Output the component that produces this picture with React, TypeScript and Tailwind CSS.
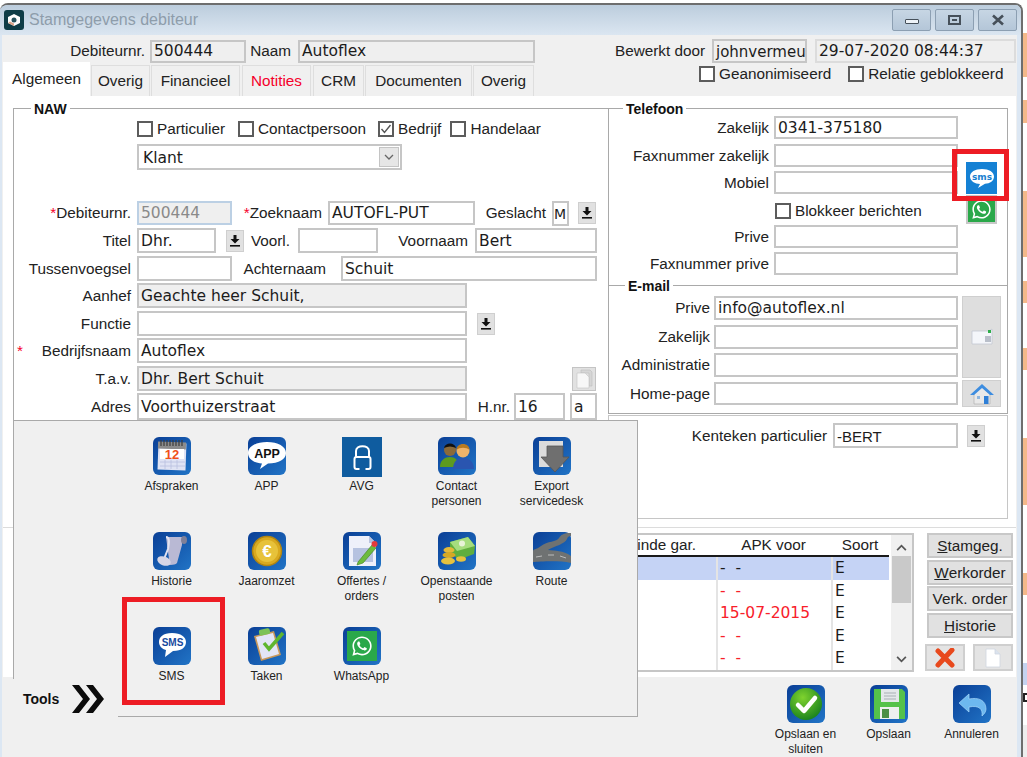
import React from "react";
import { FaWhatsapp } from "react-icons/fa";

const val = "font-[DejaVu_Sans,sans-serif] text-[15.5px] text-[#1c1c1c]";

function F({ className = "", gray = false, children }: { className?: string; gray?: boolean; children?: React.ReactNode }) {
  return (
    <div className={`flex shrink-0 items-center overflow-hidden whitespace-nowrap border-2 border-[#c6c6c6] pl-[2px] pt-[2px] ${gray ? "bg-[#efefef]" : "bg-white"} ${val} ${className}`}>
      {children}
    </div>
  );
}

function L({ className = "", children }: { className?: string; children?: React.ReactNode }) {
  return <div className={`shrink-0 whitespace-nowrap text-right ${className}`}>{children}</div>;
}

function Cb({ label, checked = false, className = "" }: { label: string; checked?: boolean; className?: string }) {
  return (
    <div className={`flex shrink-0 items-center whitespace-nowrap ${className}`}>
      <div className="flex h-[16px] w-[16px] shrink-0 items-center justify-center border-2 border-[#5c5c5c] bg-white">
        {checked && (
          <svg viewBox="0 0 12 12" className="h-[12px] w-[12px]">
            <path d="M1.5 6 L4.5 9.5 L10.5 2" fill="none" stroke="#555" strokeWidth="1.4" />
          </svg>
        )}
      </div>
      <span className="ml-[4px]">{label}</span>
    </div>
  );
}

function Dl({ className = "" }: { className?: string }) {
  return (
    <div className={`flex h-[22px] w-[18px] shrink-0 items-center justify-center border border-[#cfcfcf] bg-[#e1e1e1] ${className}`}>
      <svg viewBox="0 0 12 14" className="h-[14px] w-[12px]">
        <path d="M4.5 1 H7.5 V5 H10.5 L6 9.5 L1.5 5 H4.5 Z" fill="#111" />
        <rect x="1" y="11" width="10" height="1.6" fill="#111" />
      </svg>
    </div>
  );
}

function Tile({ id, children }: { id: string; children?: React.ReactNode }) {
  return (
    <svg viewBox="0 0 38 38" className="h-[38px] w-[38px] shrink-0">
      <defs>
        <linearGradient id={id} x1="0" y1="0" x2="1" y2="1">
          <stop offset="0" stopColor="#0a3f96" />
          <stop offset="1" stopColor="#2174c6" />
        </linearGradient>
      </defs>
      <rect x="0" y="0" width="38" height="38" rx="6" fill={`url(#${id})`} />
      {children}
    </svg>
  );
}

const icons: Record<string, React.ReactNode> = {
  Afspraken: (
    <Tile id="t1">
      <rect x="5" y="6" width="28" height="27" fill="#dfe3f4" transform="rotate(2 19 19)" />
      <rect x="5" y="5" width="28" height="7" fill="#8c8c8c" transform="rotate(2 19 8)" />
      <path d="M8 3v6M11 3v6M14 3v6M17 3v6M20 3v6M23 3v6M26 3v6M29 3v6" stroke="#3c3c3c" strokeWidth="1.2" />
      <rect x="7" y="12" width="24" height="10" fill="#fff" />
      <path d="M7 25h25M7 29h25M12 23v9M18 23v9M24 23v9" stroke="#b8bfe0" strokeWidth="0.8" />
      <text x="19" y="22" textAnchor="middle" fontSize="13" fontWeight="700" fill="#f0501a" fontFamily="Liberation Sans">12</text>
    </Tile>
  ),
  APP: (
    <Tile id="t2">
      <path d="M19 5C8 5 0 9.5 0 16c0 6 6 10 14 10.500L12 32l8-5.500C31 26.500 38 22 38 16 38 9.500 30 5 19 5Z" fill="#fff" />
      <text x="19" y="21" textAnchor="middle" fontSize="12.500" fontWeight="700" fill="#111" fontFamily="Liberation Sans">APP</text>
    </Tile>
  ),
  "Contact personen": (
    <Tile id="t4">
      <path d="M2 30c0-7 5-10 10-10s9 3 9 10Z" fill="#5d9a20" />
      <circle cx="12" cy="13" r="6" fill="#8a6a3a" />
      <path d="M6 11c1-6 11-6 12 0-4-2-8-2-12 0Z" fill="#111" />
      <path d="M15 32c0-8 5-11 10-11s11 3 11 11Z" fill="#2a55b0" />
      <circle cx="25" cy="14" r="6.500" fill="#efb46a" />
      <path d="M18.500 13c0-8 13-8 13 0-3-3-10-3-13 0Z" fill="#b77a20" />
    </Tile>
  ),
  "Export servicedesk": (
    <Tile id="t5">
      <rect x="6" y="4" width="24" height="26" fill="#dcdcdc" />
      <path d="M14 9H30V20H36L22 35L8 20H14Z" fill="#6f6f6f" stroke="#555" strokeWidth="0.8" />
    </Tile>
  ),
  Historie: (
    <Tile id="t6">
      <path d="M13 5H33C29 7 29 10 29 13L24 31C20 35 8 32 6 29L16 27Z" fill="#b9b9d4" />
      <path d="M13 5C17 5 16 11 15 17L11 27" fill="none" stroke="#e2e2f0" strokeWidth="2" />
      <ellipse cx="11" cy="29" rx="7" ry="4.500" fill="#d6d6e6" transform="rotate(20 11 29)" />
      <ellipse cx="31" cy="8" rx="3" ry="4" fill="#7f8098" />
    </Tile>
  ),
  Jaaromzet: (
    <Tile id="t7">
      <circle cx="19" cy="19" r="14.500" fill="#d9a91f" stroke="#b08512" strokeWidth="1.500" />
      <circle cx="19" cy="19" r="11" fill="#e7c23a" />
      <text x="19" y="25" textAnchor="middle" fontSize="17" fontWeight="700" fill="#fff" fontFamily="Liberation Sans">€</text>
    </Tile>
  ),
  "Offertes / orders": (
    <Tile id="t8">
      <path d="M6 4H26L33 11V34H6Z" fill="#eef0fa" />
      <path d="M26 4V11H33Z" fill="#b9c3df" />
      <rect x="10" y="16" width="20" height="14" fill="#b6c2e0" />
      <path d="M15 30L29 13L33 16L20 31L14 33Z" fill="#6dbb3c" stroke="#3f7d1e" strokeWidth="0.6" />
      <circle cx="31.500" cy="12" r="3" fill="#e33b3b" />
    </Tile>
  ),
  "Openstaande posten": (
    <Tile id="t9">
      <path d="M12 10L30 5L37 14L36 22L20 28L12 18Z" fill="#5fae3e" />
      <path d="M12 10L30 5L37 14L19 19Z" fill="#a6dd7e" />
      <circle cx="24" cy="11.500" r="3" fill="#e8f3d8" />
      <ellipse cx="11" cy="18" rx="5.500" ry="3" fill="#e2b93a" />
      <ellipse cx="11" cy="23" rx="6.500" ry="3" fill="#d5a925" />
      <ellipse cx="10" cy="29" rx="7" ry="3.500" fill="#e6c23f" />
      <ellipse cx="23" cy="27" rx="5" ry="2.800" fill="#e6c23f" />
    </Tile>
  ),
  Route: (
    <Tile id="t10">
      <path d="M38 1C30 1 28 3 26 6C24 10 14 9 8 14C3 18 0 17 0 19V30C6 30 24 28 38 31V24C30 18 22 19 15 18C22 14 32 12 34 7C35 4 37 4 38 4Z" fill="#6f7272" />
      <path d="M3 25L9 24M15 23L21 23M27 24L33 26" stroke="#cfcfcf" strokeWidth="0.8" />
    </Tile>
  ),
  SMS: (
    <Tile id="t11">
      <path d="M19 6C10 6 6 10 6 15c0 4 3 7 7 8l-1 7 8-6c9 0 13-4 13-9 0-5-5-9-14-9Z" fill="#fff" />
      <text x="19.500" y="19" textAnchor="middle" fontSize="10" fontWeight="700" fill="#17499e" fontFamily="Liberation Sans">SMS</text>
    </Tile>
  ),
  Taken: (
    <Tile id="t12">
      <path d="M6 9L26 4L33 28L13 34Z" fill="#c9985a" />
      <path d="M8 10L25 6L31 27L14 32Z" fill="#e3e5f6" />
      <rect x="11" y="2" width="11" height="6" rx="2" fill="#7cc257" transform="rotate(-12 16 5)" />
      <path d="M16 16L21 22L35 6" fill="none" stroke="#5fb62f" strokeWidth="3.500" />
    </Tile>
  ),
  WhatsApp: (
    <Tile id="t13">
      <rect x="4" y="4" width="30" height="30" fill="#2aa84a" />
      <g transform="translate(8 8)">
        <FaWhatsapp size={22} color="#fff" />
      </g>
    </Tile>
  ),
};

function AvgIcon() {
  return (
    <svg viewBox="0 0 40 40" className="h-[40px] w-[40px] shrink-0">
      <rect width="40" height="40" fill="#0f5c9f" />
      <path d="M14 20V14C14 7.500 27 7.500 27 14V20" fill="none" stroke="#fff" strokeWidth="2" />
      <path d="M17.500 32H14.500Q12.500 32 12.500 30V22Q12.500 20 14.500 20H26.500Q28.500 20 28.500 22V30Q28.500 32 26.500 32H23.500" fill="none" stroke="#fff" strokeWidth="2" />
    </svg>
  );
}

function Tool({ name, lines }: { name: string; lines: string[] }) {
  return (
    <div className="flex flex-col items-center text-[12px] leading-[15px] text-[#222]">
      {name === "AVG" ? <AvgIcon /> : icons[name]}
      <div className={`text-center whitespace-nowrap ${name === "AVG" ? "mt-[2px]" : "mt-[4px]"}`}>
        {lines.map((l) => (
          <div key={l}>{l}</div>
        ))}
      </div>
    </div>
  );
}

function Save({ children, lines }: { children: React.ReactNode; lines: string[] }) {
  return (
    <div className="flex w-[83px] shrink-0 flex-col items-center text-[12px] leading-[15px] text-[#222]">
      {children}
      <div className="mt-[4px] whitespace-nowrap text-center">
        {lines.map((l) => (
          <div key={l}>{l}</div>
        ))}
      </div>
    </div>
  );
}

function Btn({ first, rest }: { first?: string; rest: string }) {
  return (
    <div className="flex h-[25px] w-[86px] items-center justify-center whitespace-nowrap border-2 border-[#c8c8c8] bg-[#e1e1e1]">
      {first && <span className="underline">{first}</span>}
      {rest}
    </div>
  );
}

const rows = [
  { d: "-  -", red: false, sel: true },
  { d: "-  -", red: true },
  { d: "15-07-2015", red: true },
  { d: "-  -", red: true },
  { d: "-  -", red: true },
];

export default function App() {
  return (
    <div className="relative flex h-[757px] w-[1027px] overflow-hidden bg-white font-[Liberation_Sans,Arial,sans-serif] text-[15.3px] leading-none text-[#222]">
      {/* window */}
      <div className="mt-[3px] flex h-[754px] w-[1023px] shrink-0 flex-col overflow-hidden rounded-t-[8px] border-t-2 border-r-2 border-[#6e6e6e] bg-[#dce7f3]">
        {/* title bar */}
        <div className="flex h-[30px] shrink-0 items-center bg-gradient-to-b from-[#bccddd] to-[#dbe6f1]">
          <svg viewBox="0 0 20 20" className="ml-[4px] h-[20px] w-[20px] shrink-0">
            <rect width="20" height="20" rx="3" fill="#0f3d47" />
            <path d="M10 4L16 7V13L10 16L4 13V7Z" fill="#fff" />
            <circle cx="10" cy="10" r="2.500" fill="#26525c" />
            <path d="M4 13L10 16V13.500L6 11.500Z" fill="#d9a48a" />
          </svg>
          <span className="ml-[5px] text-[16px] text-[#8e9dab]">Stamgegevens debiteur</span>
          <div className="ml-auto mr-[4px] flex gap-[4px]">
            {[0, 1, 2].map((i) => (
              <div key={i} className="flex h-[22px] w-[39px] items-center justify-center rounded-[2px] border border-[#8c9fb2] bg-gradient-to-b from-[#c7d6e4] to-[#b4c6d8]">
                {i === 0 && <div className="mt-[3px] h-[5px] w-[14px] rounded-[1px] border border-[#46505a] bg-[#eef3f8]" />}
                {i === 1 && (
                  <div className="flex h-[10px] w-[13px] items-center justify-center border-2 border-[#46505a]">
                    <div className="h-[2px] w-[5px] bg-[#46505a]" />
                  </div>
                )}
                {i === 2 && (
                  <svg viewBox="0 0 14 12" className="h-[12px] w-[14px]">
                    <path d="M2 1.500L12 10.500M12 1.500L2 10.500" stroke="#46505a" strokeWidth="2.600" />
                  </svg>
                )}
              </div>
            ))}
          </div>
        </div>

        {/* client */}
        <div className="ml-[2px] mr-[4px] flex h-[722px] w-[1015px] flex-col bg-[#f0f0f0]">
          <div className="mt-[4px] flex h-[24px] shrink-0 items-center">
            <L className="w-[143px]">Debiteurnr.</L>
            <F gray className="ml-[5px] h-[23px] w-[96px]">500444</F>
            <L className="ml-[3px] w-[42px]">Naam</L>
            <F gray className="ml-[7px] h-[23px] w-[237px]">Autoflex</F>
            <L className="ml-[80px] w-[90px]">Bewerkt door</L>
            <F gray className="ml-[7px] h-[24px] w-[95px] !text-[15px]">johnvermeu</F>
            <F gray className="ml-[8px] h-[24px] w-[201px] !border-[#dcdcdc]">29-07-2020 08:44:37</F>
          </div>
          <div className="flex h-[33px] shrink-0 items-end">
            <div className="ml-[1px] flex h-[34px] w-[87px] items-center justify-center bg-white">Algemeen</div>
            {[
              { t: "Overig", c: "ml-[1px] w-[59px]" },
              { t: "Financieel", c: "ml-[1px] w-[89px]" },
              { t: "Notities", c: "ml-[2px] w-[69px] text-[#f5002a]" },
              { t: "CRM", c: "ml-[2px] w-[51px]" },
              { t: "Documenten", c: "ml-[1px] w-[107px]" },
              { t: "Overig", c: "ml-[1px] w-[61px]" },
            ].map((x, i) => (
              <div key={i} className={`flex h-[31px] items-center justify-center border-x border-t border-[#dedede] ${x.c}`}>
                {x.t}
              </div>
            ))}
            <div className="ml-[165px] flex h-[33px] items-center pb-[12px]">
              <Cb label="Geanonimiseerd" />
              <Cb label="Relatie geblokkeerd" className="ml-[17px]" />
            </div>
          </div>

          {/* white panel */}
          <div className="ml-[1px] flex h-[581px] w-[1013px] shrink-0 flex-col bg-white">
            <div className="flex h-[431px] shrink-0 pl-[10px] pt-[12px]">
              {/* NAW */}
              <div className="relative h-[419px] w-[595px] shrink-0 border-l border-t border-[#a9a9a9]">
                <div className="absolute left-[17px] top-[-7px] bg-white px-[3px] text-[14px] font-bold leading-[14px] text-[#111]">NAW</div>
                <div className="ml-[123px] mt-[12px] flex h-[16px]">
                  <Cb label="Particulier" />
                  <Cb label="Contactpersoon" className="ml-[13px]" />
                  <Cb label="Bedrijf" checked className="ml-[12px]" />
                  <Cb label="Handelaar" className="ml-[9px]" />
                </div>
                <div className={`relative ml-[123px] mt-[7px] flex h-[26px] w-[265px] items-center border-2 border-[#c6c6c6] pl-[4px] pt-[3px] ${val}`}>
                  Klant
                  <div className="absolute right-[1px] top-[1px] flex h-[20px] w-[20px] items-center justify-center border border-[#c4c4c4] bg-[#e6e6e6]">
                    <svg viewBox="0 0 10 6" className="h-[6px] w-[10px]">
                      <path d="M1 1L5 5L9 1" fill="none" stroke="#666" strokeWidth="1.300" />
                    </svg>
                  </div>
                </div>
                <div className="mt-[31px] flex h-[24px] items-center">
                  <L className="w-[117px]"><span className="text-[#f5002a]">*</span>Debiteurnr.</L>
                  <F gray className="ml-[6px] h-[24px] w-[95px] !border-[#bcd0e4] !text-[#8a8a8a]">500444</F>
                  <L className="w-[90px]"><span className="text-[#f5002a]">*</span>Zoeknaam</L>
                  <F className="ml-[6px] h-[24px] w-[147px]">AUTOFL-PUT</F>
                  <L className="w-[71px]">Geslacht</L>
                  <F className="ml-[6px] h-[25px] w-[17px] !pl-0 !text-[14px]">M</F>
                  <Dl className="ml-[9px]" />
                </div>
                <div className="mt-[3px] flex h-[25px] items-center">
                  <L className="w-[117px]">Titel</L>
                  <F className="ml-[6px] h-[25px] w-[79px]">Dhr.</F>
                  <Dl className="ml-[10px]" />
                  <L className="w-[46px]">Voorl.</L>
                  <F className="ml-[8px] h-[25px] w-[80px]" />
                  <L className="w-[90px]">Voornaam</L>
                  <F className="ml-[7px] h-[25px] w-[122px]">Bert</F>
                </div>
                <div className="mt-[3px] flex h-[25px] items-center">
                  <L className="w-[117px]">Tussenvoegsel</L>
                  <F className="ml-[6px] h-[25px] w-[95px]" />
                  <L className="w-[94px]">Achternaam</L>
                  <F className="ml-[15px] h-[25px] w-[256px]">Schuit</F>
                </div>
                <div className="mt-[2px] flex h-[25px] items-center">
                  <L className="w-[117px]">Aanhef</L>
                  <F gray className="ml-[6px] h-[25px] w-[330px]">Geachte heer Schuit,</F>
                </div>
                <div className="mt-[3px] flex h-[25px] items-center">
                  <L className="w-[117px]">Functie</L>
                  <F className="ml-[6px] h-[25px] w-[330px]" />
                  <Dl className="ml-[10px]" />
                </div>
                <div className="mt-[2px] flex h-[25px] items-center">
                  <L className="flex w-[117px] justify-between">
                    <span className="ml-[3px] text-[#f5002a]">*</span>
                    <span>Bedrijfsnaam</span>
                  </L>
                  <F className="ml-[6px] h-[25px] w-[330px]">Autoflex</F>
                </div>
                <div className="mt-[3px] flex h-[25px] items-center">
                  <L className="w-[117px]">T.a.v.</L>
                  <F gray className="ml-[6px] h-[25px] w-[330px]">Dhr. Bert Schuit</F>
                  <div className="ml-[105px] flex h-[24px] w-[24px] items-center justify-center border border-[#c4c4c4] bg-[#e1e1e1]">
                    <svg viewBox="0 0 18 20" className="h-[20px] w-[18px]">
                      <path d="M6 1H15L17 3V17H14V4H6Z" fill="#d6d6d6" stroke="#bdbdbd" strokeWidth="0.6" />
                      <path d="M2 4H10L14 8V19H2Z" fill="#f7f7f7" stroke="#c4c4c4" strokeWidth="0.6" />
                    </svg>
                  </div>
                </div>
                <div className="mt-[2px] flex h-[27px] items-center">
                  <L className="w-[117px]">Adres</L>
                  <F className="ml-[6px] h-[27px] w-[330px]">Voorthuizerstraat</F>
                  <L className="w-[43px]">H.nr.</L>
                  <F className="ml-[4px] h-[27px] w-[51px]">16</F>
                  <F className="ml-[5px] h-[27px] w-[27px]">a</F>
                </div>
              </div>

              {/* right column */}
              <div className="flex h-[419px] w-[400px] shrink-0 flex-col">
                {/* Telefoon */}
                <div className="relative flex h-[177px] shrink-0 border-x border-t border-[#a9a9a9]">
                  <div className="absolute left-[14px] top-[-7px] bg-white px-[3px] text-[14px] font-bold leading-[14px] text-[#111]">Telefoon</div>
                  <div className="w-[349px] shrink-0">
                    <div className="mt-[7px] flex h-[23px] items-center">
                      <L className="w-[160px]">Zakelijk</L>
                      <F className="ml-[5px] h-[23px] w-[184px]">0341-375180</F>
                    </div>
                    <div className="mt-[5px] flex h-[23px] items-center">
                      <L className="w-[160px]">Faxnummer zakelijk</L>
                      <F className="ml-[5px] h-[23px] w-[184px]" />
                    </div>
                    <div className="mt-[4px] flex h-[23px] items-center">
                      <L className="w-[160px]">Mobiel</L>
                      <F className="ml-[5px] h-[23px] w-[184px]" />
                    </div>
                    <div className="ml-[166px] mt-[9px] flex h-[16px]">
                      <Cb label="Blokkeer berichten" />
                    </div>
                    <div className="mt-[6px] flex h-[23px] items-center">
                      <L className="w-[160px]">Prive</L>
                      <F className="ml-[5px] h-[23px] w-[184px]" />
                    </div>
                    <div className="mt-[4px] flex h-[23px] items-center">
                      <L className="w-[160px]">Faxnummer prive</L>
                      <F className="ml-[5px] h-[23px] w-[184px]" />
                    </div>
                  </div>
                  <div className="ml-[8px] mt-[53px] flex w-[31px] shrink-0 flex-col">
                    <div className="flex h-[32px] w-[31px] items-center justify-center bg-[#1581d4]">
                      <svg viewBox="0 0 26 22" className="h-[22px] w-[26px]">
                        <path d="M13 2C6 2 1 5 1 9.500S6 17 11 17l-2 4 7-4.200C21 16.500 25 14 25 9.500S20 2 13 2Z" fill="#fff" />
                        <text x="13" y="13" textAnchor="middle" fontSize="9" fontWeight="700" fill="#1a7fd0" fontFamily="DejaVu Sans">sms</text>
                      </svg>
                    </div>
                    <div className="mt-[1px] flex h-[29px] w-[31px] items-center justify-center border-2 border-[#c8c8c8] bg-[#2aa84a]">
                      <FaWhatsapp size={21} color="#fff" />
                    </div>
                  </div>
                </div>
                {/* E-mail */}
                <div className="relative flex h-[129px] shrink-0 border-x border-y border-[#a9a9a9]">
                  <div className="absolute left-[16px] top-[-7px] bg-white px-[3px] text-[14px] font-bold leading-[14px] text-[#111]">E-mail</div>
                  <div className="w-[349px] shrink-0">
                    <div className="mt-[10px] flex h-[24px] items-center">
                      <L className="w-[101px]">Prive</L>
                      <F className="ml-[4px] h-[24px] w-[244px]">info@autoflex.nl</F>
                    </div>
                    <div className="mt-[5px] flex h-[24px] items-center">
                      <L className="w-[101px]">Zakelijk</L>
                      <F className="ml-[4px] h-[24px] w-[244px]" />
                    </div>
                    <div className="mt-[4px] flex h-[24px] items-center">
                      <L className="w-[101px]">Administratie</L>
                      <F className="ml-[4px] h-[24px] w-[244px]" />
                    </div>
                    <div className="mt-[5px] flex h-[23px] items-center">
                      <L className="w-[101px]">Home-page</L>
                      <F className="ml-[4px] h-[23px] w-[244px]" />
                    </div>
                  </div>
                  <div className="ml-[4px] mt-[10px] flex w-[39px] shrink-0 flex-col">
                    <div className="flex h-[82px] items-center justify-center border border-[#cfcfcf] bg-[#dedede]">
                      <svg viewBox="0 0 22 18" className="h-[18px] w-[22px]">
                        <path d="M1 3H18L21 1V16H1Z" fill="#f4f6fa" stroke="#c3c8d2" strokeWidth="0.8" />
                        <rect x="14" y="8" width="6" height="6" fill="#b9bfca" />
                        <rect x="17" y="2" width="3" height="3" fill="#2dae4a" />
                      </svg>
                    </div>
                    <div className="mt-[2px] flex h-[27px] items-center justify-center border border-[#cfcfcf] bg-[#dedede]">
                      <svg viewBox="0 0 26 22" className="h-[22px] w-[26px]">
                        <path d="M5 11V21H21V11L13 4Z" fill="#e9e9e9" stroke="#a8a8a8" strokeWidth="0.6" />
                        <path d="M1 12L13 1L25 12L21 12L13 5L5 12Z" fill="#3d8de0" />
                        <rect x="15" y="13" width="4.500" height="8" fill="#2f7fd6" />
                        <rect x="8" y="13" width="3" height="3" fill="#8fb6df" />
                      </svg>
                    </div>
                  </div>
                </div>
                {/* Kenteken */}
                <div className="mt-[1px] h-[104px] shrink-0 border-x border-y border-[#c6c6c6]">
                  <div className="mt-[7px] flex h-[25px] items-center">
                    <L className="w-[218px]">Kenteken particulier</L>
                    <F className="ml-[6px] h-[25px] w-[125px] !text-[15px] !font-[Liberation_Sans,sans-serif]">-BERT</F>
                    <Dl className="ml-[9px]" />
                  </div>
                </div>
              </div>
            </div>

            {/* lower */}
            <div className="flex h-[150px] shrink-0 border-t border-[#dcdcdc] pt-[5px]">
              <div className="ml-[597px] flex h-[139px] w-[314px] shrink-0 border-2 border-[#c6c6c6]">
                <div className="w-[287px] shrink-0">
                  <div className="grid h-[22px] grid-cols-[114px_115px_58px] items-center border-b-2 border-[#1a1a1a] text-center">
                    <div className="pr-[20px] text-right">Einde gar.</div>
                    <div>APK voor</div>
                    <div>Soort</div>
                  </div>
                  {rows.map((r, i) => (
                    <div key={i} className={`grid h-[22.500px] grid-cols-[114px_115px_58px] items-center ${val} ${r.sel ? "bg-[#c5d3f5]" : ""}`}>
                      <div />
                      <div className={`h-full border-l-2 border-[#e4e4e4] pl-[2px] leading-[22px] whitespace-pre ${r.red ? "text-[#f8202a]" : ""}`}>{r.d}</div>
                      <div className="h-full border-l-2 border-[#e4e4e4] pl-[2px] leading-[22px]">E</div>
                    </div>
                  ))}
                </div>
                <div className="ml-[2px] flex w-[21px] shrink-0 flex-col items-center bg-[#f0f0f0]">
                  <svg viewBox="0 0 12 8" className="mt-[9px] h-[7px] w-[11px]">
                    <path d="M1 7L6 2L11 7" fill="none" stroke="#555" strokeWidth="2" />
                  </svg>
                  <div className="mt-[5px] h-[47px] w-[19px] bg-[#c9c9c9]" />
                  <svg viewBox="0 0 12 8" className="mt-[53px] h-[7px] w-[11px]">
                    <path d="M1 1L6 6L11 1" fill="none" stroke="#555" strokeWidth="2" />
                  </svg>
                </div>
              </div>
              <div className="ml-[13px] flex w-[86px] shrink-0 flex-col">
                <div className="flex flex-col gap-[1.700px]">
                  <Btn first="S" rest="tamgeg." />
                  <Btn first="W" rest="erkorder" />
                  <Btn rest="Verk. order" />
                  <Btn first="H" rest="istorie" />
                </div>
                <div className="ml-[-2px] mt-[6px] flex gap-[8px]">
                  <div className="flex h-[27px] w-[40px] items-center justify-center border-2 border-[#cfcfcf] bg-[#e4e4e4]">
                    <svg viewBox="0 0 20 20" className="h-[20px] w-[20px]">
                      <path d="M3 3L17 17M17 2L3 17" stroke="#e8491d" strokeWidth="5" strokeLinecap="round" />
                    </svg>
                  </div>
                  <div className="flex h-[27px] w-[40px] items-center justify-center border-2 border-[#cfcfcf] bg-[#e4e4e4]">
                    <svg viewBox="0 0 16 20" className="h-[20px] w-[16px]">
                      <path d="M1 1H10L15 6V19H1Z" fill="#fff" stroke="#cfd6e0" strokeWidth="0.8" />
                      <path d="M10 1V6H15" fill="#dbe3ee" stroke="#cfd6e0" strokeWidth="0.8" />
                    </svg>
                  </div>
                </div>
              </div>
            </div>
          </div>

          {/* action bar */}
          <div className="flex shrink-0 pl-[762px] pt-[8px]">
            <Save lines={["Opslaan en", "sluiten"]}>
              <Tile id="s1">
                <defs>
                  <radialGradient id="s1g" cx="0.4" cy="0.3" r="0.8">
                    <stop offset="0" stopColor="#7fd32e" />
                    <stop offset="1" stopColor="#0f7a1c" />
                  </radialGradient>
                </defs>
                <circle cx="19" cy="19" r="16" fill="url(#s1g)" />
                <path d="M11 20L17 26L28 13" fill="none" stroke="#fff" strokeWidth="4.500" strokeLinecap="round" strokeLinejoin="round" />
              </Tile>
            </Save>
            <Save lines={["Opslaan"]}>
              <Tile id="s2">
                <path d="M4 4H32L35 7V34H4Z" fill="#55c24a" />
                <rect x="11" y="4" width="18" height="13" fill="#e4e8ea" />
                <path d="M14 8H26M14 11H26M14 14H26" stroke="#a8b0b4" strokeWidth="1" />
                <rect x="10" y="22" width="19" height="12" fill="#eef0f0" />
                <rect x="12" y="24" width="7" height="9" fill="#4b8f46" />
              </Tile>
            </Save>
            <Save lines={["Annuleren"]}>
              <Tile id="s3">
                <path d="M6 18L16 9V14C25 12 33 15 33 24C33 27 31 29 29 31C30 24 26 20 16 22V27Z" fill="#6db8ef" stroke="#a8d8fa" strokeWidth="0.7" />
              </Tile>
            </Save>
          </div>
        </div>
      </div>

      {/* strip of what lies behind the window */}
      <div className="flex w-[4px] shrink-0 flex-col">
        <div className="mt-[33px] h-[44px] bg-[#f4b98a]" />
        <div className="mt-[23px] h-[23px] bg-[#f4b98a]" />
        <div className="mt-[68px] h-[66px] bg-[#f4b98a]" />
        <div className="mt-[24px] h-[22px] bg-[#f4b98a]" />
        <div className="mt-[45px] h-[22px] bg-[#f4b98a]" />
        <div className="mt-[68px] h-[67px] bg-[#f4b98a]" />
        <div className="mt-[68px] h-[22px] bg-[#f4b98a]" />
        <div className="mt-[68px] h-[22px] bg-[#c5d3f0]" />
        <div className="mt-[8px] h-[9px] border-y-2 border-l-2 border-[#222]" />
        <div className="mt-[23px] h-[32px] bg-[#eeeeee]" />
      </div>

      {/* Tools popup, over the window */}
      <div className="absolute left-[13px] top-[420px] flex h-[297px] w-[625px] border-r border-t border-[#a9a9a9] bg-[#f0f0f0]">
        <div className="w-[105px] shrink-0">
          <div className="h-[258px] border-l border-[#a9a9a9]" />
          <div className="flex items-center pl-[10px] pt-[5px]">
            <span className="text-[14px] font-bold text-[#111]">Tools</span>
            <svg viewBox="0 0 34 30" className="ml-[12px] h-[30px] w-[34px]">
              <path d="M1 1H8L19 15L8 29H1L12 15Z M15 1H22L33 15L22 29H15L26 15Z" fill="#0c0c0c" />
            </svg>
          </div>
        </div>
        <div className="grid flex-1 auto-rows-[95px] grid-cols-[repeat(5,95px)] border-b border-[#a9a9a9] pl-[6px] pt-[16px]">
          <Tool name="Afspraken" lines={["Afspraken"]} />
          <Tool name="APP" lines={["APP"]} />
          <Tool name="AVG" lines={["AVG"]} />
          <Tool name="Contact personen" lines={["Contact", "personen"]} />
          <Tool name="Export servicedesk" lines={["Export", "servicedesk"]} />
          <Tool name="Historie" lines={["Historie"]} />
          <Tool name="Jaaromzet" lines={["Jaaromzet"]} />
          <Tool name="Offertes / orders" lines={["Offertes /", "orders"]} />
          <Tool name="Openstaande posten" lines={["Openstaande", "posten"]} />
          <Tool name="Route" lines={["Route"]} />
          <Tool name="SMS" lines={["SMS"]} />
          <Tool name="Taken" lines={["Taken"]} />
          <Tool name="WhatsApp" lines={["WhatsApp"]} />
        </div>
      </div>

      {/* red annotation boxes */}
      <div className="absolute left-[952px] top-[149px] h-[52px] w-[57px] border-[5px] border-[#ed1c24]" />
      <div className="absolute left-[122px] top-[597px] h-[108px] w-[103px] border-[5px] border-[#ed1c24]" />
    </div>
  );
}
